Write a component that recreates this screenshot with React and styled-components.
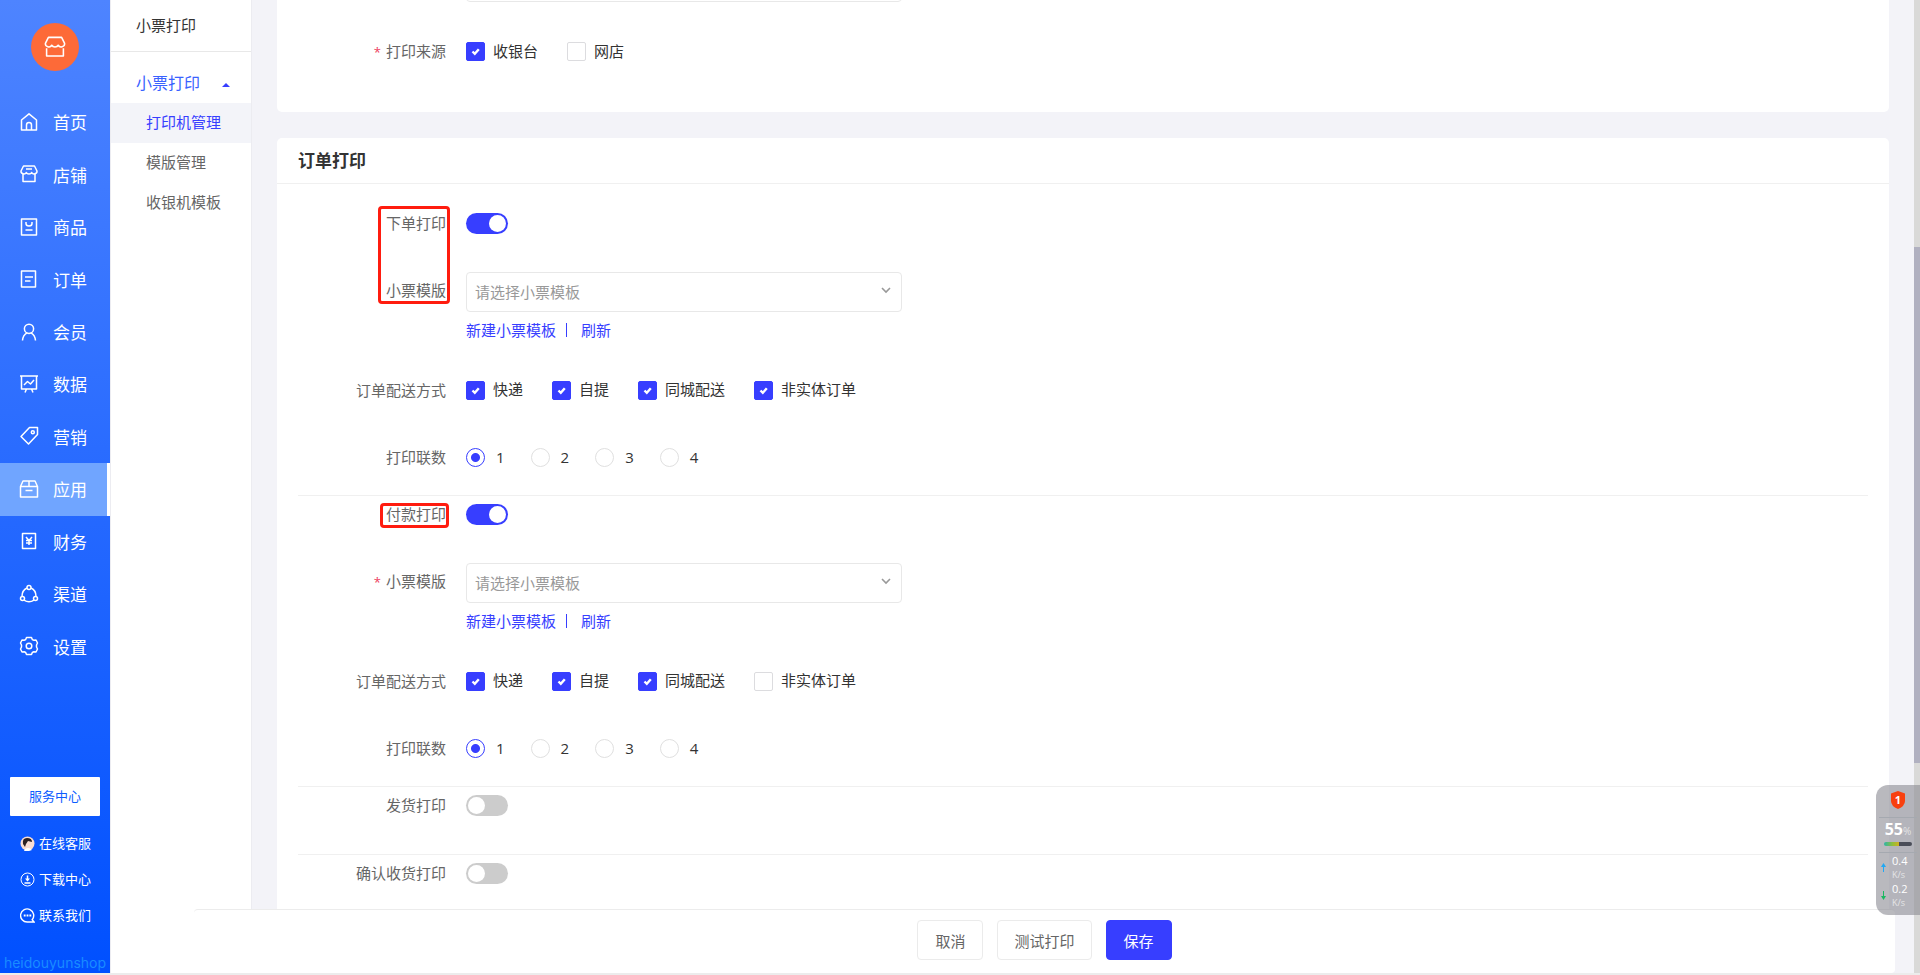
import React from "react";
import styled, { createGlobalStyle, css } from "styled-components";

const GlobalStyle = createGlobalStyle`
  * {
    box-sizing: border-box;
  }
  html, body, #root {
    height: 100%;
  }
  body {
    margin: 0;
    overflow: hidden;
    font-family: "Open Sans", "Noto Sans CJK SC", sans-serif;
    font-size: 15px;
    color: #333;
    background: #ececec;
  }
  a {
    color: inherit;
    text-decoration: none;
  }
  button, select {
    font: inherit;
  }
  svg {
    flex: none;
  }
`;

//Layout components
const Page = styled.div`
  display: flex;
  height: 100%;
  padding-bottom: 2px;
  position: relative;
`;

const Sidebar = styled.aside`
  display: flex;
  flex-direction: column;
  align-items: center;
  width: 110px;
  flex: none;
  color: #fff;
  background: linear-gradient(#4e84ff, #0050ff);
`;

const Logo = styled.div`
  display: flex;
  align-items: center;
  justify-content: center;
  width: 48px;
  height: 48px;
  margin: 23px 0 25px;
  border-radius: 50%;
  background: #fd6a38;
`;

const MainNav = styled.nav`
  display: grid;
  grid-auto-rows: 1fr;
  width: 100%;
  height: 577px;
`;

const NavLink = styled.a`
  display: flex;
  align-items: center;
  gap: 14px;
  padding: 0 0 1px 19px;
  font-size: 17px;
  ${(props) =>
    props.$active &&
    css`
      background: #70a5ff;
      border-right: 3px solid #fff;
    `}
`;

const SideFooter = styled.div`
  display: flex;
  flex-direction: column;
  align-items: center;
  width: 100%;
  margin-top: auto;
  font-size: 13px;
`;

const ServiceButton = styled.button`
  width: 90px;
  height: 39px;
  margin-bottom: 9px;
  padding: 0 0 2px;
  border: 0;
  border-radius: 1px;
  background: #fff;
  color: #0c5cff;
  font-size: 13px;
`;

const HelpLink = styled.a`
  display: flex;
  align-items: center;
  gap: 4px;
  width: 70px;
  line-height: 36px;
  white-space: nowrap;
`;

const Brand = styled.div`
  margin-top: 20px;
  font-family: "Inter", sans-serif;
  font-size: 14px;
  line-height: 20px;
  color: #1a8cff;
`;

const SubNav = styled.nav`
  width: 142px;
  flex: none;
  background: #fff;
  border: solid #ececf1;
  border-width: 0 1px;
`;

const SubTitle = styled.div`
  padding-left: 25px;
  line-height: 51px;
  border-bottom: 1px solid #e8e8e8;
`;

const SubGroup = styled.div`
  display: flex;
  align-items: center;
  gap: 22px;
  height: 39px;
  margin-top: 12px;
  padding: 0 0 4px 25px;
  font-size: 16px;
  color: #3a62ff;
`;

const Caret = styled.span`
  margin-top: 6px;
  border: 4px solid transparent;
  border-top: 0;
  border-bottom-color: #373eff;
`;

const SubLink = styled.a`
  display: block;
  padding: 0 0 2px 35px;
  line-height: 38px;
  color: ${(props) => (props.$active ? "#373eff" : "#666")};
  background: ${(props) => (props.$active ? "#f3f4f9" : "none")};
`;

const Main = styled.main`
  flex: 1;
  overflow: hidden;
  padding: 0 31px 0 25px;
  background: #f3f3f8;
`;

// the page is scrolled part of the way down
const Scrolled = styled.div`
  margin-top: -38px;
`;

const Card = styled.section`
  margin-bottom: 26px;
  border-radius: 5px;
  background: #fff;
`;

const CardTitle = styled.h2`
  margin: 0;
  padding-left: 21px;
  font-size: 17px;
  line-height: 45px;
  border-bottom: 1px solid #f0f0f0;
`;

const CardBody = styled.div`
  padding: ${(props) => props.$top}px 21px 22px;
`;

const Group = styled.div`
  display: flex;
  flex-direction: column;
  gap: 31px;
  padding-bottom: ${(props) => (props.$closed ? "31px" : "20px")};
  & + & {
    border-top: 1px solid #f0f0f0;
  }
`;

const Row = styled.div`
  display: flex;
  gap: 20px;
  min-height: 36px;
`;

const RowLabel = styled.div`
  width: 148px;
  flex: none;
  line-height: 36px;
  text-align: right;
  color: #666;
`;

const Star = styled.span`
  margin-right: 5px;
  font-size: 13px;
  color: #ed4060;
`;

const Options = styled.div`
  display: flex;
  align-items: center;
  gap: ${(props) => props.$gap}px;
`;

const Option = styled.label`
  display: flex;
  align-items: center;
  gap: ${(props) => (props.$radio ? 11 : 8)}px;
`;

const OptionText = styled.span`
  padding-bottom: 3px;
`;

const Check = styled.input`
  appearance: none;
  width: 19px;
  height: 19px;
  margin: 0;
  border: 1px solid #dcdcdf;
  border-radius: 2px;
  &:checked {
    border-color: #373eff;
    background: #373eff
      url("data:image/svg+xml,%3Csvg xmlns='http://www.w3.org/2000/svg' viewBox='0 0 17 17'%3E%3Cpath d='M5.5 8.5l2.3 2.3 4-4.6' fill='none' stroke='white' stroke-width='2.4'/%3E%3C/svg%3E");
  }
`;

const Radio = styled.input`
  appearance: none;
  width: 19px;
  height: 19px;
  margin: 0;
  border: 1px solid #e0e0e0;
  border-radius: 50%;
  &:checked {
    border-color: #373eff;
    background: radial-gradient(#373eff 4px, #fff 5px);
  }
`;

const Toggle = styled.input`
  appearance: none;
  display: flex;
  align-items: center;
  width: 42px;
  height: 21px;
  margin: 0;
  padding: 0 2px;
  border-radius: 11px;
  background: #ccc;
  &::before {
    content: "";
    width: 17px;
    height: 17px;
    border-radius: 50%;
    background: #fff;
  }
  &:checked {
    justify-content: flex-end;
    background: #373eff;
  }
`;

const Field = styled.div`
  width: 436px;
`;

const SelectWrap = styled.div`
  display: grid;
  align-items: center;
  & > * {
    grid-area: 1 / 1;
  }
  & > svg {
    justify-self: end;
    margin: 0 11px 4px 0;
    pointer-events: none;
  }
`;

const Select = styled.select`
  appearance: none;
  width: 100%;
  height: 40px;
  padding: 0 8px;
  border: 1px solid #e8e8e8;
  border-radius: 4px;
  background: #fff;
  color: #999;
`;

const FieldLinks = styled.div`
  display: flex;
  align-items: center;
  gap: 10px;
  height: 29px;
  padding-top: 6px;
  color: #373eff;
`;

const Bar = styled.span`
  width: 1px;
  height: 14px;
  margin-right: 4px;
  background: #373eff;
`;

const ActionBar = styled.footer`
  position: absolute;
  left: 194px;
  right: 25px;
  bottom: 2px;
  display: flex;
  justify-content: center;
  gap: 14px;
  height: 64px;
  padding-top: 10px;
  border-top: 1px solid #ececec;
  border-radius: 4px;
  background: #fff;
`;

const Button = styled.button`
  min-width: 66px;
  height: 40px;
  padding: 0 16px;
  border: 1px solid ${(props) => (props.$primary ? "#373eff" : "#ebebeb")};
  border-radius: 4px;
  background: ${(props) => (props.$primary ? "#373eff" : "#fff")};
  color: ${(props) => (props.$primary ? "#fff" : "#666")};
`;

// red frames drawn over the labels
const Mark = styled.span`
  position: absolute;
  left: ${(props) => props.$left}px;
  top: ${(props) => props.$top}px;
  width: ${(props) => props.$width}px;
  height: ${(props) => props.$height}px;
  border: 3px solid #ff1c0f;
  border-radius: 4px;
`;

const ScrollTrack = styled.div`
  position: absolute;
  top: 0;
  right: 0;
  bottom: 2px;
  width: 6px;
  padding-top: 247px;
  background: #d9d9d8;
`;

const ScrollThumb = styled.div`
  height: 516px;
  background: #b0b0c0;
`;

const Monitor = styled.div`
  position: absolute;
  right: 0;
  bottom: 60px;
  display: flex;
  flex-direction: column;
  align-items: center;
  width: 44px;
  height: 130px;
  padding-top: 6px;
  border-radius: 12px 0 0 12px;
  background: rgba(138, 139, 146, 0.6);
  color: #fff;
`;

const Percent = styled.div`
  width: 38px;
  margin-top: 8px;
  border-top: 1px solid #a5a9b0;
  font-size: 16px;
  font-weight: 700;
  line-height: 22px;
  text-align: center;
  white-space: nowrap;
  small {
    font-size: 10px;
    font-weight: 400;
    color: #e4e4e6;
  }
`;

const Meter = styled.div`
  width: 28px;
  height: 4px;
  margin-bottom: 6px;
  border-radius: 2px;
  background: linear-gradient(90deg, #2bb5a8, #8fbf3c 30%, #d0b020 54%, #4a4d58 54%);
`;

const Speeds = styled.div`
  width: 38px;
  border-top: 1px solid #a5a9b0;
`;

const Speed = styled.div`
  display: flex;
  align-items: center;
  gap: 6px;
  height: 28px;
  padding: 0 2px;
  font-size: 11px;
  line-height: 15px;
  small {
    display: block;
    font-size: 9px;
    line-height: 13px;
    color: #e4e4e6;
  }
`;

const Icon = ({ children, size = 20, width = 1.5 }) => (
  <svg
    width={size}
    height={size}
    viewBox="0 0 20 20"
    fill="none"
    stroke="currentColor"
    strokeWidth={width}
    strokeLinejoin="round"
  >
    {children}
  </svg>
);

const shopPath = "M4.5 2h11l2.5 5c.3 3-4 4-5.300 1.500-1 2-4.400 2-5.400 0C6 11 1.700 10 2 7z";

const navItems = [
  {
    text: "首页",
    icon: <path d="M2.500 8L10 1.800 17.500 8v10h-15zM7.500 18v-5q0-2.500 2.500-2.500t2.500 2.500v5" />,
  },
  {
    text: "店铺",
    icon: (
      <>
        <path d={shopPath} />
        <path d="M4 10v7.500h12V10M7 5h6" />
      </>
    ),
  },
  {
    text: "商品",
    icon: <path d="M2.500 2h15v16h-15zM7 5v1.500q0 2.500 3 2.500t3-2.500V5M6.500 13h7" />,
  },
  { text: "订单", icon: <path d="M2.500 2h14v16h-14zM6 8h8M6 12h5.500" /> },
  {
    text: "会员",
    icon: (
      <>
        <circle cx="10" cy="6.800" r="4.600" />
        <path d="M3.500 18.500c.3-4 2-6.300 4.500-7.700M16.500 18.500c-.3-4-2-6.300-4.500-7.700" />
      </>
    ),
  },
  {
    text: "数据",
    icon: <path d="M1 2h18M2.500 2v13h15V2M5 11l3.500-3.500 3 2.500L15 6M7.500 15L6 18.500M12.500 15l1.500 3.500" />,
  },
  {
    text: "营销",
    icon: (
      <>
        <path d="M10.500 1.500h8v7L9.500 18 2 10.500z" />
        <circle cx="13.800" cy="6.200" r="1.500" />
      </>
    ),
  },
  {
    text: "应用",
    active: true,
    icon: <path d="M1.500 7.500L4 2h12l2.500 5.500V18h-17zM1.500 7.500h17M10 2v5.500M6.500 11.500h7" />,
  },
  {
    text: "财务",
    icon: (
      <>
        <path d="M3.500 2.500h13v15h-13z" />
        <path d="M7 6l3 3.500L13 6M10 9.500V14M7 9.500h6M7 12h6" />
      </>
    ),
  },
  {
    text: "渠道",
    icon: (
      <>
        <circle cx="10" cy="3.500" r="2" />
        <circle cx="3.500" cy="14.500" r="2" />
        <circle cx="16.500" cy="14.500" r="2" />
        <path d="M8 4C4.500 5.500 3 8.500 3 12.500M12 4c3.500 1.500 5 4.500 5 8.500M5 16.200q5 3.300 10 0" />
      </>
    ),
  },
  {
    text: "设置",
    icon: (
      <>
        <path d="M7.500 1.500h5l.8 2 1.200.7 2.500-.2 1.500 3-1 2v2l1 2-1.500 3-2.500-.2-1.200.7-.8 2h-5l-.8-2-1.200-.7-2.500.2-1.500-3 1-2V9l-1-2L3 4l2.500.2 1.200-.7z" />
        <circle cx="10" cy="10" r="2.800" />
      </>
    ),
  },
];

const deliveries = ["快递", "自提", "同城配送", "非实体订单"];

const CheckOption = ({ text, checked }) => (
  <Option>
    <Check type="checkbox" defaultChecked={checked} />
    <OptionText>{text}</OptionText>
  </Option>
);

const SwitchRow = ({ id, label, on }) => (
  <Row>
    <RowLabel as="label" htmlFor={id}>
      {label}
    </RowLabel>
    <Options $gap={0}>
      <Toggle id={id} type="checkbox" role="switch" defaultChecked={on} />
    </Options>
  </Row>
);

const TemplateSelect = ({ id, text, ...rest }) => (
  <SelectWrap>
    <Select id={id} {...rest}>
      <option>{text}</option>
    </Select>
    <svg width="10" height="7" fill="none" stroke="#999" strokeWidth="1.600">
      <path d="M1 1l4 4 4-4" />
    </svg>
  </SelectWrap>
);

const TicketFields = ({ name, required, checked }) => (
  <>
    <Row>
      <RowLabel as="label" htmlFor={name + "-tpl"}>
        {required && <Star>*</Star>}小票模版
      </RowLabel>
      <Field>
        <TemplateSelect id={name + "-tpl"} text="请选择小票模板" />
        <FieldLinks>
          <a href="#new">新建小票模板</a>
          <Bar />
          <a href="#refresh">刷新</a>
        </FieldLinks>
      </Field>
    </Row>
    <Row role="group" aria-labelledby={name + "-delivery"}>
      <RowLabel id={name + "-delivery"}>订单配送方式</RowLabel>
      <Options $gap={29}>
        {deliveries.map((text, i) => (
          <CheckOption key={text} text={text} checked={i < checked} />
        ))}
      </Options>
    </Row>
    <Row role="radiogroup" aria-labelledby={name + "-copies"}>
      <RowLabel id={name + "-copies"}>打印联数</RowLabel>
      <Options $gap={26}>
        {[1, 2, 3, 4].map((n) => (
          <Option key={n} $radio>
            <Radio type="radio" name={name + "-copies"} defaultChecked={n === 1} />
            {n}
          </Option>
        ))}
      </Options>
    </Row>
  </>
);

function App() {
  return (
    <>
      <GlobalStyle />
      <Page>
        <Sidebar>
          <Logo>
            <Icon size={24} width={1.3}>
              <path d={shopPath} />
              <path d="M3 11v6.500h14V11" />
            </Icon>
          </Logo>
          <MainNav>
            {navItems.map((item) => (
              <NavLink key={item.text} href="#nav" $active={item.active}>
                <Icon>{item.icon}</Icon>
                {item.text}
              </NavLink>
            ))}
          </MainNav>
          <SideFooter>
            <ServiceButton>服务中心</ServiceButton>
            <HelpLink href="#chat">
              <svg width="15" height="15" viewBox="0 0 15 15">
                <circle cx="7.500" cy="7.500" r="7" fill="#f9ddd3" />
                <path d="M3 8Q2 2 7 2t5 4l-4-1-2 3-1 3z" fill="#2b2022" />
                <path d="M4 15q1-3 4-3t4 2l-3 1z" fill="#fff" />
              </svg>
              在线客服
            </HelpLink>
            <HelpLink href="#download">
              <svg width="15" height="15" viewBox="0 0 15 15" fill="none" stroke="#fff">
                <circle cx="7.500" cy="7.500" r="6.500" />
                <path d="M7.500 3.500v5M4.500 11h6" strokeWidth="1.500" />
                <path d="M5 6.500h5L7.500 9.500z" fill="#fff" stroke="none" />
              </svg>
              下载中心
            </HelpLink>
            <HelpLink href="#contact">
              <svg width="15" height="15" viewBox="0 0 16 16" fill="none" stroke="#fff" strokeWidth="1.500">
                <path d="M13 12.500A7 7 0 1 0 8 15h7z" />
                <path d="M4 8h2M7 8h2M10 8h2" strokeWidth="2" />
              </svg>
              联系我们
            </HelpLink>
            <Brand>heidouyunshop</Brand>
          </SideFooter>
        </Sidebar>

        <SubNav>
          <SubTitle>小票打印</SubTitle>
          <SubGroup>
            小票打印
            <Caret />
          </SubGroup>
          <SubLink href="#printers" $active>
            打印机管理
          </SubLink>
          <SubLink href="#templates">模版管理</SubLink>
          <SubLink href="#cashier">收银机模板</SubLink>
        </SubNav>

        <Main>
          <Scrolled>
            <Card>
              <CardBody $top={0}>
                <Group>
                  <Row>
                    <RowLabel />
                    <Field>
                      <TemplateSelect id="printer" text="" aria-label="打印机" />
                    </Field>
                  </Row>
                  <Row role="group" aria-labelledby="source">
                    <RowLabel id="source">
                      <Star>*</Star>打印来源
                    </RowLabel>
                    <Options $gap={29}>
                      <CheckOption text="收银台" checked />
                      <CheckOption text="网店" />
                    </Options>
                  </Row>
                </Group>
              </CardBody>
            </Card>

            <Card>
              <CardTitle>订单打印</CardTitle>
              <CardBody $top={21}>
                <Group>
                  <SwitchRow id="placed" label="下单打印" on />
                  <TicketFields name="placed" checked={4} />
                </Group>
                <Group>
                  <SwitchRow id="paid" label="付款打印" on />
                  <TicketFields name="paid" checked={3} required />
                </Group>
                <Group $closed>
                  <SwitchRow id="shipped" label="发货打印" />
                </Group>
                <Group $closed>
                  <SwitchRow id="received" label="确认收货打印" />
                </Group>
              </CardBody>
            </Card>
          </Scrolled>
        </Main>

        <ActionBar>
          <Button>取消</Button>
          <Button>测试打印</Button>
          <Button $primary>保存</Button>
        </ActionBar>

        <Mark $left={378} $top={206} $width={72} $height={98} />
        <Mark $left={380} $top={503} $width={69} $height={25} />

        <ScrollTrack>
          <ScrollThumb />
        </ScrollTrack>

        <Monitor>
          <svg width="14" height="18" viewBox="0 0 14 18">
            <path d="M7 0l7 2.500V10q0 5-7 8-7-3-7-8V2.500z" fill="#f8400f" />
            <text x="7" y="13" fontSize="11" fontWeight="700" fill="#fff" textAnchor="middle">
              1
            </text>
          </svg>
          <Percent>
            55<small>%</small>
          </Percent>
          <Meter />
          <Speeds>
            <Speed>
              <svg width="5" height="9" fill="#1fa8f5">
                <path d="M2.500 0L5 4H3v5H2V4H0z" />
              </svg>
              <div>
                0.4<small>K/s</small>
              </div>
            </Speed>
            <Speed>
              <svg width="5" height="9" fill="#18b860">
                <path d="M2.500 9L5 5H3V0H2v5H0z" />
              </svg>
              <div>
                0.2<small>K/s</small>
              </div>
            </Speed>
          </Speeds>
        </Monitor>
      </Page>
    </>
  );
}

export default App;
